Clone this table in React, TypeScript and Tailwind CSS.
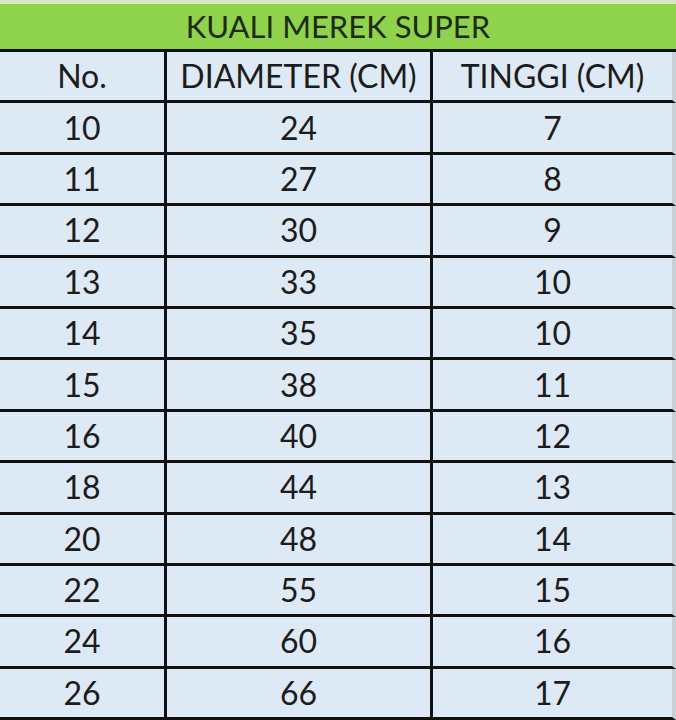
import React from 'react';

const rows: [string, string, string][] = [
  ['10', '24', '7'],
  ['11', '27', '8'],
  ['12', '30', '9'],
  ['13', '33', '10'],
  ['14', '35', '10'],
  ['15', '38', '11'],
  ['16', '40', '12'],
  ['18', '44', '13'],
  ['20', '48', '14'],
  ['22', '55', '15'],
  ['24', '60', '16'],
  ['26', '66', '17'],
];

const Row = ({ cells }: { cells: [string, string, string] }) => (
  <div className="grid grid-cols-[167px_266px_239px] h-[51.4px] border-b-[3px] border-[#111] bg-[#dde9f4] border-r-4 border-r-[#c9d0d6]">
    <div className="flex items-center justify-center border-r-[3px] border-[#111]">{cells[0]}</div>
    <div className="flex items-center justify-center border-r-[3px] border-[#111]">{cells[1]}</div>
    <div className="flex items-center justify-center">{cells[2]}</div>
  </div>
);

export default function App() {
  return (
    <div className="w-[676px] h-[720px] overflow-hidden bg-[#dde9f4] text-[#1c1c1c] text-[32px] font-['Lato',sans-serif] leading-none">
      <div className="h-[4px] bg-[#d6e6c6]" />
      <div className="h-[48px] bg-[#8fd24c] border-b-[3px] border-[#111] flex items-center justify-center text-[31px] text-[#1e2a12]">
        KUALI MEREK SUPER
      </div>
      <Row cells={['No.', 'DIAMETER (CM)', 'TINGGI (CM)']} />
      {rows.map((r) => (
        <Row key={r[0]} cells={r} />
      ))}
    </div>
  );
}
